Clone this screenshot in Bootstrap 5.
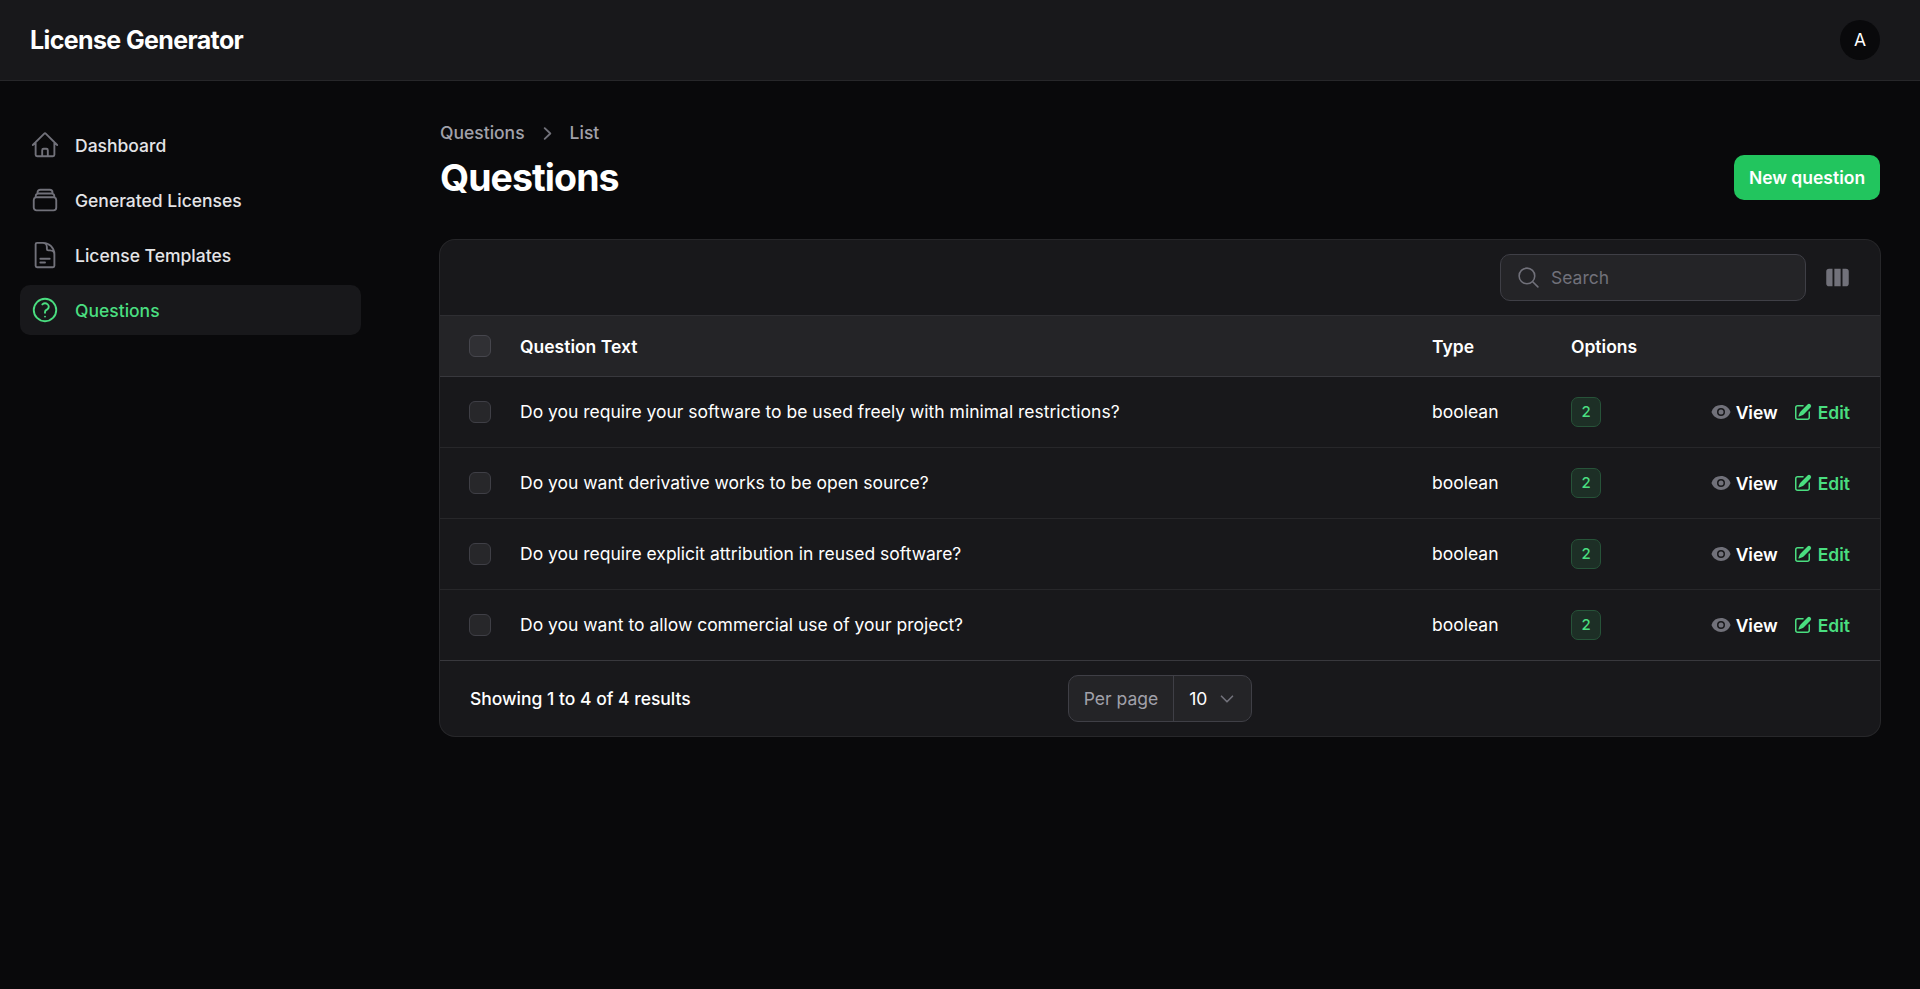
<!doctype html>
<html lang="en" data-bs-theme="dark">
<head>
<meta charset="utf-8">
<title>Questions - License Generator</title>
<link href="https://cdn.jsdelivr.net/npm/bootstrap@5.3.0/dist/css/bootstrap.min.css" rel="stylesheet">
<style>
html,body{height:100%}
body{background:#09090b;color:#fff;font-family:Inter,"Liberation Sans",sans-serif;font-size:17.5px;min-height:989px}
.top-bar{height:81px;background:#18181b;border-bottom:1px solid #27272a;padding:0 40px 0 30px}
.brand-name{font-size:25px;font-weight:700;letter-spacing:-.625px;color:#fff;padding-top:2px}
.user-dot{width:40px;height:40px;border-radius:50%;background:#09090b;font-size:17.5px;color:#fff}
.side-col{width:380px;flex:none;padding:39px 19px 0 20px}
.side-item{height:50px;border-radius:10px;padding:2px 10px 0;gap:15px;color:#e4e4e7;font-weight:500;margin-bottom:5px;text-decoration:none}
.side-item svg{width:30px;height:30px;color:#71717a;flex:none;margin-top:-2px}
.side-item.is-on{background:#18181b;color:#4ade80}
.side-item.is-on svg{color:#4ade80}
.main-col{padding:40px 40px 0 60px;min-width:0}
.crumbs{font-weight:500;color:#a1a1aa;gap:10px;height:24px}
.crumbs svg{width:25px;height:25px;color:#71717a}
.page-title{font-size:37.5px;font-weight:700;letter-spacing:-.94px;line-height:45px;margin:0;color:#fff}
.btn-new{background:#22c55e;color:#fff;border:0;border-radius:10px;height:45px;width:146px;font-weight:600;font-size:17.5px;padding:2px 0 0}
.btn-new:hover{background:#22c55e;color:#fff}
.head-row{margin-top:10px;margin-bottom:40px}
.panel{background:#18181b;box-shadow:0 0 0 1px #27272a;border-radius:15px;overflow:hidden}
.tool-row{height:76px;padding:0 30px 0 0;gap:19px;border-bottom:1px solid #2e2e32}
.search-box{width:306px;height:47px;background:#242427;border:1px solid #3f3f46;border-radius:10px;padding:0 14px 0 15px;gap:10px}
.search-box svg{width:25px;height:25px;color:#71717a;flex:none}
.search-box input{background:transparent;border:0;outline:0;color:#fff;font-size:17.5px;width:100%;padding:2px 0 0}
.search-box input::placeholder{color:#71717a}
.cols-ico{width:25px;height:25px;color:#71717a}
.q-table{width:100%;table-layout:fixed;border-collapse:separate;border-spacing:0;margin:0;color:#fff}
.q-table th{background:#242427;height:61px;font-weight:600;border-bottom:1px solid #38383d;vertical-align:middle;padding:2px 0 0}
.q-table th.c-check{padding-top:0}
.q-table td{height:71px;border-bottom:1px solid #27272a;vertical-align:middle;padding:0;background:#18181b}
.q-table tr:last-child td{border-bottom:1px solid #38383d}
.c-check{width:80px;padding-left:29px!important}
.c-type{width:139px}
.c-opts{width:140px}
.c-acts{width:169px}
.tick{width:22px;height:22px;background:#27272a;border:1px solid #3f3f46;border-radius:6px;display:block}
.q-table th .tick{background:#303034;border-color:#46464d}
.count-pill{display:inline-flex;align-items:center;justify-content:center;width:30px;height:30px;border-radius:7px;background:#1d2f26;border:1px solid #275339;color:#4ade80;font-size:15px;font-weight:500}
.act-row{gap:15px;padding-right:30px;font-weight:600}
.act-link{gap:5px;text-decoration:none;color:#fff;padding-top:2px}
.act-link svg{width:20px;height:20px;color:#71717a;margin-top:-2px}
.act-link.is-edit,.act-link.is-edit svg{color:#4ade80}
.foot-row{height:75px;padding:0 30px}
.foot-cell{flex:1 1 0}
.foot-text{font-weight:500;color:#fff;padding-top:2px}
.per-page{height:47px;border:1px solid #3f3f46;border-radius:10px;background:#242427;overflow:hidden}
.per-label{padding:2px 15px 0;color:#a1a1aa;border-right:1px solid #3f3f46;height:100%}
.per-val{padding:2px 15px 0;gap:9px;color:#fff;width:77px}
.per-val svg{width:22px;height:22px;color:#71717a;flex:none;margin-top:-2px}
</style>
</head>
<body>
<header class="top-bar d-flex align-items-center justify-content-between">
  <span class="brand-name">License Generator</span>
  <span class="user-dot d-flex align-items-center justify-content-center">A</span>
</header>
<div class="d-flex">
  <nav class="side-col">
    <a class="side-item d-flex align-items-center" href="#"><svg viewBox="0 0 24 24" fill="none" stroke="currentColor" stroke-width="1.5" stroke-linecap="round" stroke-linejoin="round"><path d="M2.25 12l8.954-8.955c.44-.439 1.152-.439 1.591 0L21.75 12M4.5 9.75v10.125c0 .621.504 1.125 1.125 1.125H9.75v-4.875c0-.621.504-1.125 1.125-1.125h2.25c.621 0 1.125.504 1.125 1.125V21h4.125c.621 0 1.125-.504 1.125-1.125V9.75M8.25 21h8.25"/></svg>Dashboard</a>
    <a class="side-item d-flex align-items-center" href="#"><svg viewBox="0 0 24 24" fill="none" stroke="currentColor" stroke-width="1.5" stroke-linecap="round" stroke-linejoin="round"><path d="M6 6.878V6a2.25 2.25 0 012.25-2.25h7.5A2.25 2.25 0 0118 6v.878m-12 0c.235-.083.487-.128.75-.128h10.5c.263 0 .515.045.75.128m-12 0A2.25 2.25 0 004.5 9v.878m13.5-3A2.25 2.25 0 0119.5 9v.878m0 0a2.246 2.246 0 00-.75-.128H5.25c-.263 0-.515.045-.75.128m15 0A2.25 2.25 0 0121 12v6a2.25 2.25 0 01-2.25 2.25H5.25A2.25 2.25 0 013 18v-6c0-.98.626-1.813 1.5-2.122"/></svg>Generated Licenses</a>
    <a class="side-item d-flex align-items-center" href="#"><svg viewBox="0 0 24 24" fill="none" stroke="currentColor" stroke-width="1.5" stroke-linecap="round" stroke-linejoin="round"><path d="M19.5 14.25v-2.625a3.375 3.375 0 00-3.375-3.375h-1.5A1.125 1.125 0 0113.5 7.125v-1.5a3.375 3.375 0 00-3.375-3.375H8.25m0 12.75h7.5m-7.5 3H12M10.5 2.25H5.625c-.621 0-1.125.504-1.125 1.125v17.25c0 .621.504 1.125 1.125 1.125h12.75c.621 0 1.125-.504 1.125-1.125V11.25a9 9 0 00-9-9z"/></svg>License Templates</a>
    <a class="side-item is-on d-flex align-items-center" href="#"><svg viewBox="0 0 24 24" fill="none" stroke="currentColor" stroke-width="1.5" stroke-linecap="round" stroke-linejoin="round"><path d="M9.879 7.519c1.171-1.025 3.071-1.025 4.242 0 1.172 1.025 1.172 2.687 0 3.712-.203.179-.43.326-.67.442-.745.361-1.45.999-1.45 1.827v.75M21 12a9 9 0 11-18 0 9 9 0 0118 0zm-9 5.25h.008v.008H12v-.008z"/></svg>Questions</a>
  </nav>
  <main class="main-col flex-grow-1">
    <div class="crumbs d-flex align-items-center"><span>Questions</span><svg viewBox="0 0 20 20" fill="currentColor"><path fill-rule="evenodd" d="M7.21 14.77a.75.75 0 01.02-1.06L11.168 10 7.23 6.29a.75.75 0 111.04-1.08l4.5 4.25a.75.75 0 010 1.08l-4.5 4.25a.75.75 0 01-1.06-.02z" clip-rule="evenodd"/></svg><span>List</span></div>
    <div class="head-row d-flex align-items-center justify-content-between">
      <h1 class="page-title">Questions</h1>
      <button class="btn btn-new" type="button">New question</button>
    </div>
    <section class="panel">
      <div class="tool-row d-flex align-items-center justify-content-end">
        <label class="search-box d-flex align-items-center m-0"><svg viewBox="0 0 24 24" fill="none" stroke="currentColor" stroke-width="1.5" stroke-linecap="round" stroke-linejoin="round"><path d="M21 21l-5.197-5.197m0 0A7.5 7.5 0 105.196 5.196a7.5 7.5 0 0010.607 10.607z"/></svg><input type="text" placeholder="Search" aria-label="Search"></label>
        <svg class="cols-ico" viewBox="0 0 20 20" fill="currentColor"><path d="M14 17h2.75A2.25 2.25 0 0019 14.75v-9.5A2.25 2.25 0 0016.75 3H14v14zM12.5 3h-5v14h5V3zM3.25 3H6v14H3.25A2.25 2.25 0 011 14.75v-9.5A2.25 2.25 0 013.25 3z"/></svg>
      </div>
      <table class="q-table">
        <thead><tr><th class="c-check"><span class="tick"></span></th><th>Question Text</th><th class="c-type">Type</th><th class="c-opts">Options</th><th class="c-acts"></th></tr></thead>
        <tbody>
          <tr><td class="c-check"><span class="tick"></span></td><td>Do you require your software to be used freely with minimal restrictions?</td><td>boolean</td><td><span class="count-pill">2</span></td><td><div class="act-row d-flex justify-content-end"><a class="act-link d-flex align-items-center" href="#"><svg viewBox="0 0 20 20" fill="currentColor"><path d="M10 12.5a2.5 2.5 0 100-5 2.5 2.5 0 000 5z"/><path fill-rule="evenodd" clip-rule="evenodd" d="M.664 10.59a1.651 1.651 0 010-1.186A10.004 10.004 0 0110 3c4.257 0 7.893 2.66 9.336 6.41.147.381.146.804 0 1.186A10.004 10.004 0 0110 17c-4.257 0-7.893-2.66-9.336-6.41zM14 10a4 4 0 11-8 0 4 4 0 018 0z"/></svg>View</a><a class="act-link is-edit d-flex align-items-center" href="#"><svg viewBox="0 0 20 20" fill="currentColor"><path d="M5.433 13.917l1.262-3.155A4 4 0 017.58 9.42l6.92-6.918a2.121 2.121 0 013 3l-6.92 6.918c-.383.383-.84.685-1.343.886l-3.154 1.262a.5.5 0 01-.65-.65z"/><path d="M3.5 5.75c0-.69.56-1.25 1.25-1.25H10A.75.75 0 0010 3H4.75A2.75 2.75 0 002 5.75v9.5A2.75 2.75 0 004.75 18h9.5A2.75 2.75 0 0017 15.25V10a.75.75 0 00-1.5 0v5.25c0 .69-.56 1.25-1.25 1.25h-9.5c-.69 0-1.25-.56-1.25-1.25v-9.5z"/></svg>Edit</a></div></td></tr>
          <tr><td class="c-check"><span class="tick"></span></td><td>Do you want derivative works to be open source?</td><td>boolean</td><td><span class="count-pill">2</span></td><td><div class="act-row d-flex justify-content-end"><a class="act-link d-flex align-items-center" href="#"><svg viewBox="0 0 20 20" fill="currentColor"><path d="M10 12.5a2.5 2.5 0 100-5 2.5 2.5 0 000 5z"/><path fill-rule="evenodd" clip-rule="evenodd" d="M.664 10.59a1.651 1.651 0 010-1.186A10.004 10.004 0 0110 3c4.257 0 7.893 2.66 9.336 6.41.147.381.146.804 0 1.186A10.004 10.004 0 0110 17c-4.257 0-7.893-2.66-9.336-6.41zM14 10a4 4 0 11-8 0 4 4 0 018 0z"/></svg>View</a><a class="act-link is-edit d-flex align-items-center" href="#"><svg viewBox="0 0 20 20" fill="currentColor"><path d="M5.433 13.917l1.262-3.155A4 4 0 017.58 9.42l6.92-6.918a2.121 2.121 0 013 3l-6.92 6.918c-.383.383-.84.685-1.343.886l-3.154 1.262a.5.5 0 01-.65-.65z"/><path d="M3.5 5.75c0-.69.56-1.25 1.25-1.25H10A.75.75 0 0010 3H4.75A2.75 2.75 0 002 5.75v9.5A2.75 2.75 0 004.75 18h9.5A2.75 2.75 0 0017 15.25V10a.75.75 0 00-1.5 0v5.25c0 .69-.56 1.25-1.25 1.25h-9.5c-.69 0-1.25-.56-1.25-1.25v-9.5z"/></svg>Edit</a></div></td></tr>
          <tr><td class="c-check"><span class="tick"></span></td><td>Do you require explicit attribution in reused software?</td><td>boolean</td><td><span class="count-pill">2</span></td><td><div class="act-row d-flex justify-content-end"><a class="act-link d-flex align-items-center" href="#"><svg viewBox="0 0 20 20" fill="currentColor"><path d="M10 12.5a2.5 2.5 0 100-5 2.5 2.5 0 000 5z"/><path fill-rule="evenodd" clip-rule="evenodd" d="M.664 10.59a1.651 1.651 0 010-1.186A10.004 10.004 0 0110 3c4.257 0 7.893 2.66 9.336 6.41.147.381.146.804 0 1.186A10.004 10.004 0 0110 17c-4.257 0-7.893-2.66-9.336-6.41zM14 10a4 4 0 11-8 0 4 4 0 018 0z"/></svg>View</a><a class="act-link is-edit d-flex align-items-center" href="#"><svg viewBox="0 0 20 20" fill="currentColor"><path d="M5.433 13.917l1.262-3.155A4 4 0 017.58 9.42l6.92-6.918a2.121 2.121 0 013 3l-6.92 6.918c-.383.383-.84.685-1.343.886l-3.154 1.262a.5.5 0 01-.65-.65z"/><path d="M3.5 5.75c0-.69.56-1.25 1.25-1.25H10A.75.75 0 0010 3H4.75A2.75 2.75 0 002 5.75v9.5A2.75 2.75 0 004.75 18h9.5A2.75 2.75 0 0017 15.25V10a.75.75 0 00-1.5 0v5.25c0 .69-.56 1.25-1.25 1.25h-9.5c-.69 0-1.25-.56-1.25-1.25v-9.5z"/></svg>Edit</a></div></td></tr>
          <tr><td class="c-check"><span class="tick"></span></td><td>Do you want to allow commercial use of your project?</td><td>boolean</td><td><span class="count-pill">2</span></td><td><div class="act-row d-flex justify-content-end"><a class="act-link d-flex align-items-center" href="#"><svg viewBox="0 0 20 20" fill="currentColor"><path d="M10 12.5a2.5 2.5 0 100-5 2.5 2.5 0 000 5z"/><path fill-rule="evenodd" clip-rule="evenodd" d="M.664 10.59a1.651 1.651 0 010-1.186A10.004 10.004 0 0110 3c4.257 0 7.893 2.66 9.336 6.41.147.381.146.804 0 1.186A10.004 10.004 0 0110 17c-4.257 0-7.893-2.66-9.336-6.41zM14 10a4 4 0 11-8 0 4 4 0 018 0z"/></svg>View</a><a class="act-link is-edit d-flex align-items-center" href="#"><svg viewBox="0 0 20 20" fill="currentColor"><path d="M5.433 13.917l1.262-3.155A4 4 0 017.58 9.42l6.92-6.918a2.121 2.121 0 013 3l-6.92 6.918c-.383.383-.84.685-1.343.886l-3.154 1.262a.5.5 0 01-.65-.65z"/><path d="M3.5 5.75c0-.69.56-1.25 1.25-1.25H10A.75.75 0 0010 3H4.75A2.75 2.75 0 002 5.75v9.5A2.75 2.75 0 004.75 18h9.5A2.75 2.75 0 0017 15.25V10a.75.75 0 00-1.5 0v5.25c0 .69-.56 1.25-1.25 1.25h-9.5c-.69 0-1.25-.56-1.25-1.25v-9.5z"/></svg>Edit</a></div></td></tr>
        </tbody>
      </table>
      <div class="foot-row d-flex align-items-center">
        <div class="foot-cell foot-text">Showing 1 to 4 of 4 results</div>
        <div class="per-page d-flex align-items-center"><span class="per-label d-flex align-items-center">Per page</span><span class="per-val d-flex align-items-center">10<svg viewBox="0 0 20 20" fill="none" stroke="currentColor" stroke-width="1.5" stroke-linecap="round" stroke-linejoin="round"><path d="M5 7.5l5 5 5-5"/></svg></span></div>
        <div class="foot-cell"></div>
      </div>
    </section>
  </main>
</div>
<script src="https://cdn.jsdelivr.net/npm/bootstrap@5.3.0/dist/js/bootstrap.bundle.min.js"></script>
</body>
</html>
